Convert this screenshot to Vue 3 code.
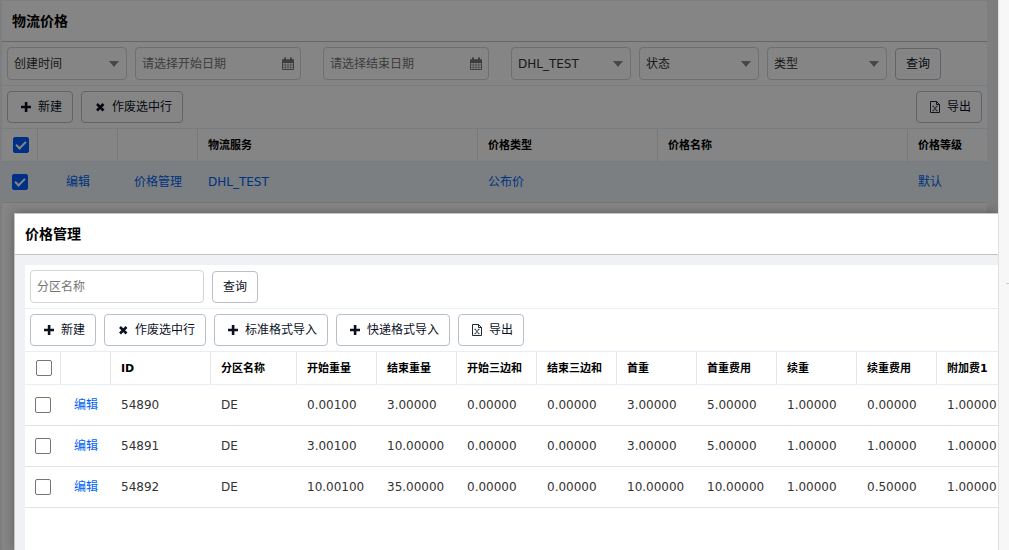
<script setup>
import { ref } from 'vue'

const serviceColumns = [
  { key: 'service', label: '物流服务', width: 'w280' },
  { key: 'type', label: '价格类型', width: 'w180' },
  { key: 'name', label: '价格名称', width: 'w250' },
  { key: 'level', label: '价格等级', width: 'auto' },
]
const services = ref([
  { checked: true, service: 'DHL_TEST', type: '公布价', name: '', level: '默认' },
])
const allServices = ref(true)

const zoneHeads = [
  'ID', '分区名称', '开始重量', '结束重量', '开始三边和', '结束三边和',
  '首重', '首重费用', '续重', '续重费用', '附加费1',
]
const zones = ref([
  { checked: false, cells: ['54890', 'DE', '0.00100', '3.00000', '0.00000', '0.00000', '3.00000', '5.00000', '1.00000', '0.00000', '1.00000'] },
  { checked: false, cells: ['54891', 'DE', '3.00100', '10.00000', '0.00000', '0.00000', '3.00000', '5.00000', '1.00000', '1.00000', '1.00000'] },
  { checked: false, cells: ['54892', 'DE', '10.00100', '35.00000', '0.00000', '0.00000', '10.00000', '10.00000', '1.00000', '0.50000', '1.00000'] },
])
const allZones = ref(false)
</script>

<template>
  <div class="app">
    <svg class="defs" aria-hidden="true">
      <symbol id="i-plus" viewBox="0 0 16 16"><path d="M6.800 3h2.600v3.700H13v2.600H9.400V13H6.800V9.300H3V6.700h3.800z" fill="currentColor" /></symbol>
      <symbol id="i-times" viewBox="0 0 16 16"><path d="M5 5l6.500 6.500M11.500 5L5 11.500" stroke="currentColor" stroke-width="2.600" fill="none" /></symbol>
      <symbol id="i-excel" viewBox="0 0 16 16">
        <path d="M3.500 2.500h6l3 3v8h-9zM9.500 2.500v3h3" stroke="currentColor" stroke-width=".9" fill="none" />
        <path d="M6.300 7.500l3.400 4M9.700 7.500l-3.400 4M5.500 7.300h1.700M8.800 7.300h1.700M5.500 11.700h1.700M8.800 11.700h1.700" stroke="currentColor" stroke-width=".8" fill="none" />
      </symbol>
      <symbol id="i-cal" viewBox="0 0 14 14">
        <path d="M1.500 3h11v9.500h-11zM1.500 5.500h11" stroke="currentColor" fill="none" />
        <path d="M1.500 8h11M1.500 10.300h11M4.200 5v7.500M7 5v7.500M9.800 5v7.500" stroke="currentColor" stroke-width=".6" fill="none" />
        <path d="M1 2.500h12V5H1zM3 .5h2V4H3zM9 .5h2V4H9z" fill="currentColor" />
      </symbol>
      <symbol id="i-caret" viewBox="0 0 10 6"><path d="M0 0h10L5 6z" fill="currentColor" /></symbol>
    </svg>

    <main class="stage">
      <section class="page">
        <h1 class="title">物流价格</h1>
        <form class="bar filters" @submit.prevent>
          <div class="field pick">
            <select aria-label="时间类型"><option>创建时间</option></select>
            <svg class="caret"><use href="#i-caret" /></svg>
          </div>
          <div class="field date">
            <input type="text" placeholder="请选择开始日期" aria-label="开始日期">
            <svg class="cal"><use href="#i-cal" /></svg>
          </div>
          <div class="field date">
            <input type="text" placeholder="请选择结束日期" aria-label="结束日期">
            <svg class="cal"><use href="#i-cal" /></svg>
          </div>
          <div class="field pick">
            <select aria-label="物流服务"><option>DHL_TEST</option></select>
            <svg class="caret"><use href="#i-caret" /></svg>
          </div>
          <div class="field pick">
            <select aria-label="状态"><option>状态</option></select>
            <svg class="caret"><use href="#i-caret" /></svg>
          </div>
          <div class="field pick">
            <select aria-label="类型"><option>类型</option></select>
            <svg class="caret"><use href="#i-caret" /></svg>
          </div>
          <button class="btn">查询</button>
        </form>
        <div class="bar">
          <button class="btn"><svg class="icon"><use href="#i-plus" /></svg>新建</button>
          <button class="btn"><svg class="icon"><use href="#i-times" /></svg>作废选中行</button>
          <button class="btn end"><svg class="icon"><use href="#i-excel" /></svg>导出</button>
        </div>
        <table class="grid">
          <colgroup>
            <col class="w36"><col class="w80"><col class="w80">
            <col v-for="c in serviceColumns" :key="c.key" :class="c.width">
          </colgroup>
          <thead>
            <tr>
              <th class="tick"><input v-model="allServices" type="checkbox" aria-label="全选"></th>
              <th></th>
              <th></th>
              <th v-for="c in serviceColumns" :key="c.key">{{ c.label }}</th>
            </tr>
          </thead>
          <tbody>
            <tr v-for="s in services" :key="s.service" :class="{ on: s.checked }">
              <td class="tick"><input v-model="s.checked" type="checkbox" aria-label="选择行"></td>
              <td class="mid"><a href="#">编辑</a></td>
              <td class="mid"><a href="#">价格管理</a></td>
              <td v-for="c in serviceColumns" :key="c.key"><a v-if="s[c.key]" href="#">{{ s[c.key] }}</a></td>
            </tr>
          </tbody>
        </table>
      </section>

      <div class="mask">
        <section class="dialog" role="dialog" aria-labelledby="dialog-title">
          <h2 id="dialog-title" class="title">价格管理</h2>
          <div class="body">
            <div class="panel">
              <form class="bar filters" @submit.prevent>
                <div class="field zone"><input type="text" placeholder="分区名称" aria-label="分区名称"></div>
                <button class="btn">查询</button>
              </form>
              <div class="bar">
                <button class="btn"><svg class="icon"><use href="#i-plus" /></svg>新建</button>
                <button class="btn"><svg class="icon"><use href="#i-times" /></svg>作废选中行</button>
                <button class="btn"><svg class="icon"><use href="#i-plus" /></svg>标准格式导入</button>
                <button class="btn"><svg class="icon"><use href="#i-plus" /></svg>快递格式导入</button>
                <button class="btn"><svg class="icon"><use href="#i-excel" /></svg>导出</button>
              </div>
              <table class="grid wide">
                <colgroup>
                  <col class="w36"><col class="w50"><col class="w100"><col class="w86">
                  <col v-for="n in 9" :key="n" class="w80">
                </colgroup>
                <thead>
                  <tr>
                    <th class="tick"><input v-model="allZones" type="checkbox" aria-label="全选"></th>
                    <th></th>
                    <th v-for="h in zoneHeads" :key="h">{{ h }}</th>
                  </tr>
                </thead>
                <tbody>
                  <tr v-for="z in zones" :key="z.cells[0]">
                    <td class="tick"><input v-model="z.checked" type="checkbox" aria-label="选择行"></td>
                    <td class="mid"><a href="#">编辑</a></td>
                    <td v-for="(v, i) in z.cells" :key="i">{{ v }}</td>
                  </tr>
                </tbody>
              </table>
            </div>
          </div>
        </section>
      </div>
    </main>
    <aside class="rail"><hr></aside>
  </div>
</template>

<style>
body {
  overflow: hidden;
}
</style>

<style scoped>
.app {
  display: flex;
  height: 100vh;
  font: 12px/18px "DejaVu Sans", "Noto Sans CJK SC", sans-serif;
  color: #333;
}
.app * {
  box-sizing: border-box;
}
.defs {
  position: absolute;
  width: 0;
  height: 0;
}
.stage {
  position: relative;
  flex: 1;
  min-width: 0;
  overflow: hidden;
  padding: 1px 11px 0 2px;
  background: #f0f1f5;
}
.rail {
  flex: none;
  width: 11px;
  background: #f7f7f7;
  border-left: 1px solid #e3e3e3;
}
.rail hr {
  margin: 283px 0 0 7px;
  border: 0;
  border-top: 1px solid #ccc;
}
.page {
  height: 100%;
  background: #fff;
}
.title {
  margin: 0;
  padding: 10px;
  border-bottom: 1px solid #c3c3c3;
  background: #fff;
  color: #000;
  font-size: 14px;
  line-height: 20px;
}
.bar {
  display: flex;
  gap: 8px;
  padding: 5px;
  border-bottom: 1px solid #e6eff7;
}
.filters {
  align-items: flex-end;
}
.field {
  display: grid;
  align-items: center;
  flex: none;
}
.field > * {
  grid-area: 1 / 1;
}
.pick {
  width: 120px;
}
.date {
  width: 166px;
  margin-right: 14px;
}
.zone {
  width: 174px;
}
.field input,
.field select {
  appearance: none;
  width: 100%;
  height: 33px;
  margin: 0;
  padding: 0 6px;
  border: 1px solid #d4d5d9;
  border-radius: 4px;
  background: #fff;
  color: #333;
  font: inherit;
}
.field input::placeholder {
  color: #757575;
  opacity: 1;
}
.caret {
  justify-self: end;
  width: 10px;
  height: 6px;
  margin-right: 8px;
  color: #888;
  pointer-events: none;
}
.cal {
  justify-self: end;
  width: 14px;
  height: 14px;
  margin-right: 6px;
  color: #777;
  pointer-events: none;
}
.btn {
  display: flex;
  align-items: center;
  height: 32px;
  margin: 0;
  padding: 0 10px;
  border: 1px solid #bcbec6;
  border-radius: 4px;
  background: #fff;
  color: #0b111f;
  font: inherit;
  white-space: nowrap;
}
.end {
  margin-left: auto;
}
.icon {
  width: 16px;
  height: 16px;
  margin-right: 4px;
}
.grid {
  width: 100%;
  table-layout: fixed;
  border-collapse: separate;
  border-spacing: 0;
}
.wide {
  width: 992px;
}
.w36 { width: 36px; }
.w50 { width: 50px; }
.w80 { width: 80px; }
.w86 { width: 86px; }
.w100 { width: 100px; }
.w180 { width: 180px; }
.w250 { width: 250px; }
.w280 { width: 280px; }
th {
  height: 33px;
  padding: 2px 10px 0;
  border-right: 1px solid #e6e6e6;
  border-bottom: 1px solid #e6eff7;
  color: #000;
  font-size: 11px;
  text-align: left;
  white-space: nowrap;
}
th:last-child {
  border-right: 0;
}
td {
  height: 41px;
  padding: 0 0 0 10px;
  border-bottom: 1px solid #e3e3e3;
  white-space: nowrap;
}
.on td {
  background: #ebf3f7;
}
.tick,
.mid {
  padding: 0;
  text-align: center;
}
.tick input {
  appearance: none;
  display: block;
  width: 16px;
  height: 16px;
  margin: 0 auto;
  border: 1px solid #767676;
  border-radius: 2px;
  background: #fff;
}
th.tick {
  padding: 0 0 0 2px;
}
.tick input:checked {
  display: grid;
  place-items: center;
  border-color: #005cff;
  background: #005cff;
}
.tick input:checked::after {
  content: "";
  box-sizing: border-box;
  width: 10px;
  height: 6px;
  margin-bottom: 3px;
  border: solid #fff;
  border-width: 0 0 2px 2px;
  transform: rotate(-45deg);
}
a {
  color: #0062f5;
  text-decoration: none;
}
.mask {
  position: absolute;
  inset: 0;
  padding: 213px 0 0 14px;
  background: rgba(0, 0, 0, 0.48);
}
.dialog {
  display: flex;
  flex-direction: column;
  height: 100%;
  border: solid #c3c3c3;
  border-width: 1px 0 0 1px;
  box-shadow: 0 0 10px rgba(0, 0, 0, 0.3);
}
.body {
  flex: 1;
  min-height: 0;
  padding: 10px 0 0 10px;
  background: #f0f1f5;
}
.panel {
  height: 100%;
  overflow: hidden;
  background: #fff;
}
</style>
